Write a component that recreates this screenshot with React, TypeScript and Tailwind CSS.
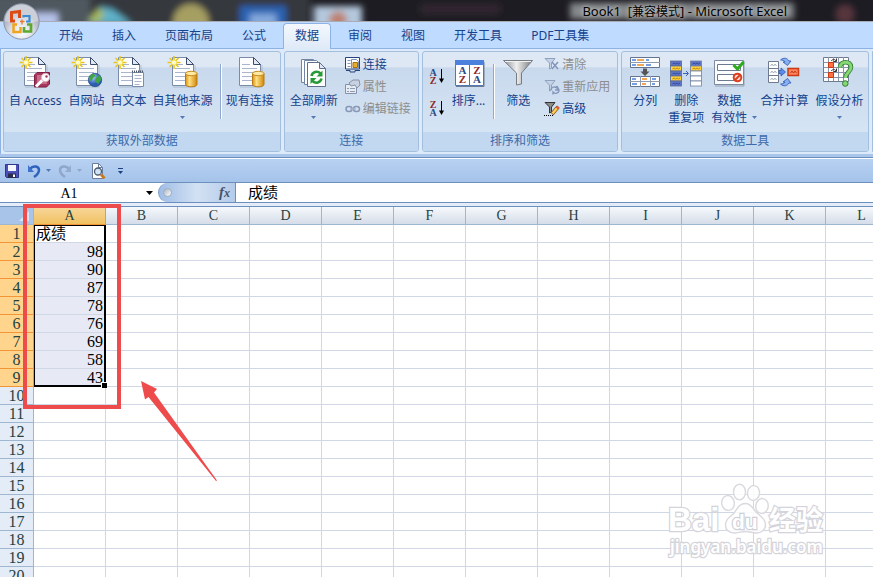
import { ReactNode, useState } from "react";

const TABS = ["开始", "插入", "页面布局", "公式", "数据", "审阅", "视图", "开发工具", "PDF工具集"];
const COLUMNS = "ABCDEFGHIJKLMNOPQRSTUVWXYZ".split("");
const ROWS = Array.from({ length: 60 }, (_, i) => i + 1);
const SCORES = ["成绩", "98", "90", "87", "78", "76", "69", "58", "43"];

const Svg = ({ children, size = "size-8", box = "0 0 32 32" }: { children: ReactNode; size?: string; box?: string }) => (
	<svg className={`${size} shrink-0`} viewBox={box} fill="none" aria-hidden="true">
		{children}
	</svg>
);

const Doc = () => (
	<>
		<path d="M6 31h22V9" stroke="#8d9bb0" strokeOpacity=".5" />
		<path d="M5.5 1.5h14l7 7v21h-21z" fill="#fdfdff" stroke="#7b8ca8" />
		<path d="M19.5 1.5v7h7z" fill="#dfe8f4" stroke="#3c4c68" />
		<path d="M8 8.5h8M8 12.5h15M8 16.5h15M8 20.5h15M8 24.5h15" stroke="#a9b5cb" />
	</>
);

const Star = () => (
	<>
		<path d="M7 0v13M.5 6.500h13M2.500 2l9 9M11.500 2l-9 9" stroke="#e8c520" strokeWidth="1.600" />
		<circle cx="7" cy="6.500" r="2.600" fill="#fffbd0" stroke="#f7e04a" />
	</>
);

const Cylinder = () => (
	<>
		<path d="M18.500 17.500v11c0 3 11.500 3 11.500 0v-11z" fill="url(#gold)" stroke="#b87a10" />
		<ellipse cx="24.200" cy="17.500" rx="5.800" ry="2.200" fill="#ffe9a0" stroke="#c58a1c" />
	</>
);

const AccessIcon = () => (
	<Svg>
		<Doc />
		<Star />
		<path d="M18 16.500h12.500V28l-3 3H15.500V19z" fill="#a8355c" stroke="#7d2144" />
		<path d="M18 19h10v9H18z" fill="#c76c8a" />
		<path d="M17 30.500l8-8" stroke="#fff" strokeWidth="3" />
		<circle cx="26.500" cy="21.500" r="4.200" fill="#fff" stroke="#d9a8b8" />
		<circle cx="27.500" cy="20.500" r="1.200" fill="#a8355c" />
	</Svg>
);

const WebIcon = () => (
	<Svg>
		<Doc />
		<Star />
		<circle cx="24" cy="24" r="6.700" fill="url(#globe)" stroke="#2c4f8c" strokeWidth=".8" />
		<path d="M19 20c2-3 4-2 5-1s-1 2-2 3-1 3-2 3-2-3-1-5zM25 22l3-3c2 1 2 3 2 5l-3 4-3-3z" fill="#3fa544" />
	</Svg>
);

const TextIcon = () => (
	<Svg>
		<Doc />
		<Star />
		<path d="M19.500 16.500h11v14h-11z" fill="#fff" stroke="#7b8ca8" />
		<path d="M19 15.500h12" stroke="#4a5568" strokeWidth="2" strokeDasharray="1 1" />
		<path d="M21.500 19.500h7M21.500 22.500h7M21.500 25.500h7M21.500 28.500h5" stroke="#a9b5cb" />
	</Svg>
);

const OtherIcon = () => (
	<Svg>
		<Doc />
		<Star />
		<Cylinder />
	</Svg>
);

const ExistingIcon = () => (
	<Svg>
		<Doc />
		<Cylinder />
	</Svg>
);

const RefreshIcon = () => (
	<Svg>
		<path d="M3.500 3.500h12l4 4v19h-16z" fill="#fff" stroke="#7285a5" />
		<path d="M6.500 4.500h12l5 5v19h-17z" fill="#fff" stroke="#7285a5" />
		<path d="M9.500 6.500h12l6 6v18h-18z" fill="#fff" stroke="#5f708c" />
		<path d="M21.500 6.500v6h6z" fill="#dfe8f4" stroke="#5f708c" />
		<path d="M13.500 20c.8-4.500 6-5.500 9-2.500M23.500 22.500c-1 4.500-6 5.500-9 2.500" stroke="#279b35" strokeWidth="2.600" />
		<path d="M24.500 14.500v6h-6zM12.500 28v-6h6z" fill="#279b35" />
	</Svg>
);

const SortIcon = () => (
	<Svg>
		<path d="M3 30.500h28V6" stroke="#6b7c96" />
		<path d="M2.500 4.500h28v25h-28z" fill="#fff" stroke="#5677ad" />
		<path d="M2 4h29v5H2z" fill="#4b80dc" />
		<path d="M16.500 9v20" stroke="#5f708c" />
		<g fontFamily="Liberation Serif, serif" fontSize="11" fontWeight="bold" textAnchor="middle">
			<text x="9.500" y="18" fill="#2b4a85">A</text>
			<text x="9.500" y="27" fill="#8e2828">Z</text>
			<text x="24" y="18" fill="#8e2828">Z</text>
			<text x="24" y="27" fill="#2b4a85">A</text>
		</g>
	</Svg>
);

const SortOrder = ({ top, bottom }: { top: string; bottom: string }) => (
	<Svg size="size-4" box="0 0 16 16">
		<g fontFamily="Liberation Serif, serif" fontSize="10" fontWeight="bold" textAnchor="middle">
			<text x="4" y="7.500" fill={top === "A" ? "#2b4a85" : "#8e2828"}>{top}</text>
			<text x="4" y="15.500" fill={bottom === "A" ? "#2b4a85" : "#8e2828"}>{bottom}</text>
		</g>
		<path d="M12.500 1v12" stroke="#000" />
		<path d="M10 10.500h5l-2.500 4.500z" fill="#000" />
	</Svg>
);

const FunnelIcon = () => (
	<Svg>
		<path d="M1.500 4.500h29L19.500 17v11l-5 1V17z" fill="url(#steel)" stroke="#777c83" />
		<path d="M3 5.500h26" stroke="#f2f2f2" />
	</Svg>
);

const SplitIcon = () => (
	<Svg>
		<path d="M1.500 1.500h29v10h-29zM1.500 20.500h29v10h-29z" fill="#fff" stroke="#64748f" />
		<path d="M1 6.500h30M1 25.500h30M11.500 20v11M21.500 20v11" stroke="#8d9ab0" />
		<path d="M3 4h4M3 9h4M17 4h3M17 9h5M3 23h4M3 28h5M23 23h4M23 28h3" stroke="#4b7edb" strokeWidth="1.400" />
		<path d="M8 4h7M8 9h7M13 23h5M13 28h4" stroke="#f08a1d" strokeWidth="1.600" />
		<path d="M14 12.500h4v3h2.500l-4.500 4.500-4.500-4.500H14z" fill="#555" />
	</Svg>
);

const DedupeIcon = () => (
	<Svg>
		{[5, 10, 15, 20, 25].map((y, i) => (
			<g key={y}>
				<rect x=".500" y={y} width="11" height="5" fill={i % 2 ? "#ffd23c" : "#5d76ca"} stroke="#5a6a94" strokeWidth=".8" />
				<path d={`M2.500 ${y + 3}l1.500-1 1.500 1 1.500-1 1.500 1 1.500-1`} stroke={i % 2 ? "#a57a16" : "#2c3f8d"} strokeWidth=".8" />
				<rect x="20.500" y={y} width="11" height="5" fill={["#5d76ca", "#ffd23c", "#fff", "#fff", "#fff"][i]} stroke="#7180a0" strokeWidth=".8" />
				{i < 2 && (
					<path d={`M22.500 ${y + 3}l1.500-1 1.500 1 1.500-1 1.500 1 1.500-1`} stroke={i ? "#a57a16" : "#2c3f8d"} strokeWidth=".8" />
				)}
			</g>
		))}
		<path d="M13 17.500h5M16 15l2.500 2.500L16 20" stroke="#3b62b8" />
	</Svg>
);

const ValidationIcon = () => (
	<Svg>
		<path d="M2 30h29V5" stroke="#929fb2" />
		<path d="M1.500 4.500h29v24h-29z" fill="#fbfcfe" stroke="#7d8aa0" />
		<path d="M4.500 8.500h23v6h-23zM4.500 18.500h23v6h-23z" fill="#fff" stroke="#6d7a92" />
		<path d="M20.500 9l4 4 6-7" stroke="#2faa1e" strokeWidth="3" />
		<circle cx="24.500" cy="21.500" r="3.800" fill="#fbe0d8" stroke="#d8401f" strokeWidth="2" />
		<path d="M22 24l5-5" stroke="#d8401f" strokeWidth="2" />
	</Svg>
);

const MergeIcon = () => (
	<Svg>
		<path d="M.500 5.500h10v21H.500zM.500 12.500h10M.500 19.500h10" fill="#fff" stroke="#6d7a92" />
		<path d="M2.500 9.500l1.500-1 1.500 1 1.500-1 1.500 1M2.500 16.500l1.500-1 1.500 1 1.500-1 1.500 1M2.500 23.500l1.500-1 1.500 1 1.500-1 1.500 1" stroke="#8e9ab0" />
		<path d="M11 14.500h2V12l4.500 4-4.500 4v-2.500h-2z" fill="#5c8de8" stroke="#2d57ae" strokeWidth=".8" />
		<path d="M12.500 4c3-3 7-2 8.500 1h2l-3.500 4.500L15 6h2c-1-1.500-2.500-2-4.500-2z" fill="#86aff0" stroke="#2d57ae" strokeWidth=".8" />
		<path d="M12.500 28c3 3 7 2 8.500-1h2l-3.500-4.500L15 26h2c-1 1.500-2.500 2-4.500 2z" fill="#86aff0" stroke="#2d57ae" strokeWidth=".8" />
		<path d="M20 12.500h10.500v7H20z" fill="#ff8258" stroke="#c93a16" strokeWidth="1.500" />
		<path d="M22.500 16.500l1.500-1 1.500 1 1.500-1 1.500 1" stroke="#a42a0c" />
	</Svg>
);

const WhatIfIcon = () => (
	<Svg>
		<path d="M.500 1.500h25v24H.500z" fill="#fff" stroke="#6d7a92" />
		<path d="M.500 6.500h25M.500 11.500h25M.500 16.500h25M.500 21.500h25M5.500 1v24M10.500 1v24M15.500 1v24M20.500 1v24" stroke="#8794ab" />
		<path d="M5.500 6.500h5v5h-5zM5.500 16.500h5v5h-5z" fill="#ff7043" stroke="#c93a16" />
		<path d="M8 5c2-2 4-2 5 0M8 15c2-2 4-2 5 0M13.500 2.500v3h-3M13.500 12.500v3h-3" stroke="#333" />
		<path d="M17 11.500c0-7 11-7 11-.5 0 5-5.500 5.500-5.500 11" stroke="#2f7d33" strokeWidth="4.600" />
		<path d="M17 11.500c0-7 11-7 11-.5 0 5-5.500 5.500-5.500 11" stroke="#86d673" strokeWidth="3" />
		<circle cx="22.300" cy="27.500" r="2.800" fill="#86d673" stroke="#2f7d33" />
	</Svg>
);

const LinkedIcon = () => (
	<Svg size="size-4" box="0 0 16 16">
		<path d="M.5.500h14v11.500H.500z" fill="#fff" stroke="#26437b" />
		<path d="M2.500 3.500h3M2.500 6.500h3M2.500 9.500h3" stroke="#8294b6" />
		<path d="M6.500 2.500h5l2 2v7h-7z" fill="#fff" stroke="#7d8fb3" />
		<path d="M8 5.500h4.500v5H8z" fill="#e9ad2a" stroke="#a46f0c" />
		<path d="M1 13.500h4v1.500h5v-1.500h5" stroke="#26437b" />
	</Svg>
);

const PropsIcon = () => (
	<Svg size="size-4" box="0 0 16 16">
		<path d="M.5 5.500h11v9H.500z" fill="#e7ecf4" stroke="#8592aa" />
		<path d="M2 9.500h2M5 9.500h5M2 12.500h2M5 12.500h5" stroke="#8f9bb1" />
		<path d="M4 4l4-3h6l1 5-3 3-2-3-4 1z" fill="#c8d1df" stroke="#8592aa" />
	</Svg>
);

const ChainIcon = () => (
	<Svg size="size-4" box="0 0 16 16">
		<rect x="1" y="5.500" width="6" height="5" rx="2.500" stroke="#8797b6" strokeWidth="1.500" />
		<rect x="8.500" y="5.500" width="6" height="5" rx="2.500" stroke="#8797b6" strokeWidth="1.500" />
		<path d="M5 8h6" stroke="#a9b5cb" strokeWidth="1.500" />
	</Svg>
);

const SmallFunnel = ({ kind }: { kind: "clear" | "reapply" | "advanced" }) => (
	<Svg size="size-4" box="0 0 16 16">
		<path
			d="M1 1.500h10L7.500 6v5l-2 1V6z"
			fill={kind === "advanced" ? "#8c8c8c" : "#c6d2e5"}
			stroke={kind === "advanced" ? "#333" : "#8fa1c1"}
		/>
		{kind === "clear" && <path d="M8 5l6 7M14 5l-6 7" stroke="#8497bb" strokeWidth="1.600" />}
		{kind === "reapply" && <path d="M7 11c0-3 4-4 6-2v-2l2 4h-4M15 12c-1 3-4 3-6 1v2.500" stroke="#8497bb" strokeWidth="1.400" />}
		{kind === "advanced" && (
			<>
				<path d="M0 14.500h9" stroke="#000" strokeDasharray="1 1" />
				<path d="M8 13l6-7" stroke="#8b5a12" strokeWidth="4" />
				<path d="M8.500 12.500l5-6" stroke="#ffcf5a" strokeWidth="2.400" />
				<path d="M13 7.500l1.500-2" stroke="#d95b43" strokeWidth="3" />
			</>
		)}
	</Svg>
);

const Caret = ({ className = "text-[#5579b5]" }: { className?: string }) => (
	<svg className={`${className} w-[5px] h-[3px] shrink-0`} viewBox="0 0 5 3" aria-hidden="true">
		<path d="M0 0h5L2.500 3z" fill="currentColor" />
	</svg>
);

const BigButton = ({ icon, lines, menu }: { icon: ReactNode; lines: string[]; menu?: boolean }) => (
	<button type="button" className="flex flex-col items-center px-[3px] pt-1 whitespace-nowrap">
		{icon}
		<span className="mt-1 flex flex-col items-center leading-[17px]">
			{lines.map((line, i) => (
				<span key={line} className="flex items-center gap-[5px]">
					{line}
					{menu && i === 1 && <Caret className="-mr-[10px] text-[#5579b5]" />}
				</span>
			))}
			{menu && lines.length === 1 && (
				<span className="flex h-[17px] items-center">
					<Caret />
				</span>
			)}
		</span>
	</button>
);

const SmallButton = ({ icon, label, disabled }: { icon: ReactNode; label: string; disabled?: boolean }) => (
	<button
		type="button"
		disabled={disabled}
		className="flex h-[22px] items-center gap-[2px] whitespace-nowrap disabled:text-[#8d8d8d]"
	>
		{icon}
		{label}
	</button>
);

const Divider = () => <div className="mt-3 h-[55px] w-[2px] shrink-0 border-l border-[#8faad0] bg-white" />;

const Group = ({ title, className, children }: { title: string; className: string; children: ReactNode }) => (
	<section className="flex h-[101px] shrink-0 flex-col overflow-hidden rounded-[3px] border border-[#a3bfdd] bg-linear-to-b from-[#dee8f5] from-15% via-[#c9d9ed] via-16% to-[#d9e8f6]">
		<div className={`flex h-20 ${className}`}>{children}</div>
		<h2 className="flex-1 bg-[#c1d8f0] text-center leading-[18px] text-[#3e6aaa]">{title}</h2>
	</section>
);

const Wallpaper = () => (
	<svg className="absolute inset-0 h-full w-full" aria-hidden="true">
		<defs>
			<filter id="soft" x="-20%" y="-50%" width="140%" height="200%">
				<feGaussianBlur stdDeviation="3" />
			</filter>
		</defs>
		<g filter="url(#soft)">
			<rect x="-10" y="-8" width="320" height="40" fill="#34383c" />
			<rect x="-10" y="-4" width="100" height="34" fill="#50585e" />
			<rect x="32" y="13" width="26" height="14" fill="#b7c3ea" />
			<path d="M88 24l12-17 12 2 20 15z" fill="#5fb2c9" />
			<path d="M88 20l11-12 6 6-8 10z" fill="#a8b860" />
			<circle cx="191" cy="22" r="18" fill="#a69f62" />
			<rect x="240" y="6" width="46" height="24" fill="#2c63b4" />
			<rect x="250" y="14" width="26" height="12" fill="#85aade" />
			<rect x="314" y="6" width="48" height="24" fill="#b4c8dd" />
			<circle cx="338" cy="20" r="9" fill="#bd8271" />
			<rect x="420" y="4" width="80" height="10" fill="#302830" />
			<rect x="570" y="3" width="224" height="16" fill="#85898c" />
			<circle cx="845" cy="14" r="10" fill="#56363e" />
		</g>
	</svg>
);

const OfficeButton = () => (
	<button type="button" aria-label="Office" className="absolute top-[3px] left-[3px] z-10 size-[37px]">
		<svg viewBox="0 0 37 37" className="size-full" fill="none">
			<circle cx="18.500" cy="18.500" r="17.700" fill="url(#orb)" stroke="#8b95a7" />
			<path d="M2 18a16.500 16.500 0 0133 0c-8 3-25 3-33 0z" fill="#fff" fillOpacity=".3" />
			<path d="M12 18H8.500V9.500L16.500 8.500V15" stroke="#dd4a14" strokeWidth="3" />
			<path d="M20.500 14.500V13H26.500V18.500H23" stroke="#3d8bd0" strokeWidth="2.200" />
			<path d="M14 21.500H10.500V29H17.500V24" stroke="#f1a51c" strokeWidth="2.500" />
			<path d="M21 24V28.500H28V21.500H24" stroke="#5fa830" strokeWidth="2.700" />
			<path d="M17 18.500h4.500M19 16.500v5" stroke="#e8792a" strokeWidth="1.300" />
		</svg>
	</button>
);

const QuickAccess = () => (
	<div className="flex h-6 shrink-0 items-center border-t border-white bg-linear-to-b from-[#b7d1f2] to-[#a5c3ea] pl-1">
		<button type="button" aria-label="保存" className="mr-[6px]">
			<Svg size="size-4" box="0 0 16 16">
				<path d="M1.500 1.500h13v13h-12l-1-1z" fill="#4c50b8" stroke="#30348c" />
				<path d="M4 2h8v6H4z" fill="#f4f6fd" />
				<path d="M4 10.500h8V15H4z" fill="#2b2b4e" />
				<path d="M9 11.500h2V14H9z" fill="#fff" />
			</Svg>
		</button>
		<button type="button" aria-label="撤消" className="flex items-center gap-1">
			<Svg size="size-4" box="0 0 16 16">
				<path d="M4 6c3-4 9-3 9 1 0 3-2 5-5 7" stroke="#2f62bc" strokeWidth="2.500" />
				<path d="M2 2v7h6z" fill="#3c72cc" />
			</Svg>
			<Caret />
		</button>
		<button type="button" aria-label="恢复" disabled className="ml-[6px] flex items-center gap-1">
			<Svg size="size-4" box="0 0 16 16">
				<path d="M12 6C9 2 3 3 3 7c0 3 2 5 5 7" stroke="#8ea6ca" strokeWidth="2.500" />
				<path d="M14 2v7H8z" fill="#94abce" />
			</Svg>
			<Caret className="text-[#8ea6ca]" />
		</button>
		<button type="button" aria-label="打印预览" className="ml-2">
			<Svg size="size-4" box="0 0 16 16">
				<path d="M2.500.5h6l4 4v11h-10z" fill="#fff" stroke="#6b7d9c" />
				<path d="M8.500.5v4h4" stroke="#6b7d9c" />
				<circle cx="8" cy="8.500" r="3.500" fill="#cfe4f5" stroke="#4a5a72" strokeWidth="1.300" />
				<path d="M11 11.500l3.500 4" stroke="#c9791d" strokeWidth="2.800" />
			</Svg>
		</button>
		<button type="button" aria-label="自定义快速访问工具栏" className="ml-3 flex flex-col items-center gap-[2px]">
			<span className="h-px w-[5px] bg-[#1c3f7f]" />
			<Caret className="text-[#1c3f7f]" />
		</button>
	</div>
);

const FormulaBar = () => {
	const [value, setValue] = useState("成绩");

	return (
		<div className="flex h-[21px] shrink-0 border-y border-[#6d8fbe] bg-white font-['Liberation_Serif','Noto_Sans_CJK_SC',serif] text-black">
			<input aria-label="名称框" defaultValue="A1" className="w-[138px] pt-[2px] text-center text-sm outline-none" />
			<button type="button" aria-label="名称列表" className="flex w-5 items-center justify-center pl-[2px]">
				<svg className="h-1 w-[7px]" viewBox="0 0 7 4">
					<path d="M0 0h7L3.500 4z" fill="#000" />
				</svg>
			</button>
			<div className="flex w-[78px] items-center justify-between rounded-l-full border-r border-l border-r-[#6d8fbe] border-l-[#7f9dc8] bg-linear-to-r from-[#9fbde6] via-[#d3e1f3] to-[#b3cbea] pr-1 pl-1">
				<span className="size-[9px] rounded-full border border-[#9fadbf] bg-linear-to-br from-[#aab4c2] to-white" />
				<button type="button" aria-label="插入函数" className="pr-px text-[15px] leading-4 font-bold text-[#46536a] italic">
					f<span className="text-[12px]">x</span>
				</button>
			</div>
			<input
				aria-label="编辑栏"
				value={value}
				onChange={event => setValue(event.target.value)}
				className="min-w-0 flex-1 pt-[2px] pl-3 text-[15px] outline-none"
			/>
		</div>
	);
};

const Watermark = () => (
	<svg className="pointer-events-none absolute right-[44px] bottom-[16px] h-[78px] w-[162px]" viewBox="0 0 162 78" aria-hidden="true">
		<g fontFamily="Liberation Sans, Noto Sans CJK SC, sans-serif" fontWeight="bold" fill="#fff" stroke="#d4d4da" strokeWidth="2.400" paintOrder="stroke">
			<text x="1" y="48" fontSize="33">Bai</text>
			<text x="102" y="47" fontSize="27">经验</text>
			<text x="3" y="70" fontSize="17" fontFamily="Noto Sans, sans-serif" fontWeight="600">jingyan.baidu.com</text>
		</g>
		<g fill="#fff" fillOpacity=".85" stroke="#d9d9de" strokeWidth="1.400">
			<ellipse cx="61" cy="20" rx="6.300" ry="7.500" transform="rotate(-8 61 20)" />
			<ellipse cx="72.500" cy="9" rx="6" ry="7.800" />
			<ellipse cx="86.500" cy="10" rx="6" ry="7.500" transform="rotate(8 86.500 10)" />
			<ellipse cx="95" cy="23" rx="6.200" ry="7.500" transform="rotate(8 95 23)" />
			<path d="M78.500 20.500c-6 0-8 5-11 9s-9 6-9 12 4 8.500 9 8.500 7-1.500 11-1.500 7 1.500 11 1.500 9-2.500 9-8.500-5-8-9-12-5-9-11-9z" />
		</g>
		<text x="65" y="46" fontFamily="Liberation Sans, sans-serif" fontSize="21" fontWeight="bold" fill="#fff" stroke="#d0d0d8" strokeWidth="2.400" paintOrder="stroke">
			du
		</text>
	</svg>
);

const Sheet = () => (
	<div className="relative min-h-0 flex-1">
		<div className="h-full overflow-hidden">
			<table className="border-separate border-spacing-0 font-['Liberation_Serif','Noto_Sans_CJK_SC',serif] text-base leading-4 text-black">
				<thead>
					<tr className="text-sm leading-4 text-[#27413e]">
						<th aria-label="全选" className="h-[18px] w-[34px] min-w-[34px] border-r border-b border-[#9eb6ce] bg-[#a9c4e9] p-0">
							<svg className="ml-auto mr-1 size-[10px]" viewBox="0 0 10 10">
								<path d="M10 0v10H0z" fill="#d9e5f5" />
							</svg>
						</th>
						{COLUMNS.map((column, i) => (
							<th
								key={column}
								className={
									i === 0
										? "h-[18px] w-[72px] min-w-[72px] border-r border-b border-[#f29536] bg-linear-to-b from-[#f8d79b] to-[#f1c15f] p-0 pt-px font-normal"
										: "h-[18px] w-[72px] min-w-[72px] border-r border-b border-[#9eb6ce] bg-linear-to-b from-[#f6f9fc] to-[#d5dde9] p-0 pt-px font-normal"
								}
							>
								{column}
							</th>
						))}
					</tr>
				</thead>
				<tbody>
					{ROWS.map(row => (
						<tr key={row}>
							<th
								className={
									row <= SCORES.length
										? "h-[18px] border-r border-b border-[#f29536] bg-[#ffd58d] p-0 pt-px font-normal text-[#27413e]"
										: "h-[18px] border-r border-b border-[#9eb6ce] bg-[#e4ecf7] p-0 pt-px font-normal text-[#27413e]"
								}
							>
								{row}
							</th>
							{COLUMNS.map((column, i) => {
								const score = i === 0 ? SCORES[row - 1] : undefined;
								if (!score) {
									return <td key={column} className="h-[18px] border-r border-b border-[#d0d7e5] p-0" />;
								}
								return (
									<td
										key={column}
										className={
											row === 1
												? "h-[18px] border-r border-b border-[#d0d7e5] p-0 pt-px pl-[2px] text-[15px]"
												: "h-[18px] border-r border-b border-[#d0d7e5] bg-[#e7eaf5] p-0 pt-px pr-[2px] text-right"
										}
									>
										{score}
									</td>
								);
							})}
						</tr>
					))}
				</tbody>
			</table>
		</div>
		{/* selection frame and fill handle */}
		<div className="pointer-events-none absolute top-[18px] left-[34px] h-[162px] w-[72px] border-t border-r-2 border-b-2 border-l border-black">
			<span className="absolute -right-[3px] -bottom-[3px] size-[6px] border-t border-l border-white bg-black" />
		</div>
		<div className="pointer-events-none absolute -top-[3px] left-[23px] h-[205px] w-[98px] border-4 border-[#ee4c4c]" />
		<svg className="pointer-events-none absolute top-[173px] left-[140px] h-[102px] w-[78px]" viewBox="0 0 78 102" aria-hidden="true">
			<path d="M1 1l16 8-3 3.500L77 100.500l-1 .5L8.500 17 5 19.500z" fill="#ee4c4c" />
		</svg>
		<Watermark />
	</div>
);

const App = () => {
	const [active, setActive] = useState("数据");

	return (
		<div className="relative flex h-screen flex-col overflow-hidden bg-white font-['Noto_Sans','Noto_Sans_CJK_SC',sans-serif] text-xs text-[#15428b]">
			<svg className="absolute size-0" aria-hidden="true">
				<defs>
					<linearGradient id="gold">
						<stop stopColor="#d8920f" />
						<stop offset=".35" stopColor="#ffe084" />
						<stop offset="1" stopColor="#d08608" />
					</linearGradient>
					<radialGradient id="globe" cx=".35" cy=".3">
						<stop stopColor="#a8cef5" />
						<stop offset="1" stopColor="#2a5cb0" />
					</radialGradient>
					<linearGradient id="steel">
						<stop stopColor="#8c8f94" />
						<stop offset=".45" stopColor="#efefef" />
						<stop offset="1" stopColor="#77797d" />
					</linearGradient>
					<radialGradient id="orb" cx=".5" cy=".8">
						<stop stopColor="#ffffff" />
						<stop offset=".6" stopColor="#dde1ea" />
						<stop offset="1" stopColor="#b4bac8" />
					</radialGradient>
				</defs>
			</svg>
			<OfficeButton />
			<header className="relative flex h-[22px] shrink-0 items-center justify-end overflow-hidden border-b border-[#a9acb4] bg-[#1d1c22] pr-[86px]">
				<Wallpaper />
				<h1 className="relative text-[13px] leading-5 whitespace-pre text-black [text-shadow:0_0_4px_#ddd,0_0_8px_#aaa]">
					Book1  [<span className="text-xs">兼容模式</span>] - Microsoft Excel
				</h1>
			</header>
			<nav className="flex h-[27px] shrink-0 items-end gap-[5px] border-b border-[#8db2e3] bg-[#bfdbff] pl-[47px]">
				{TABS.map(tab => (
					<button
						key={tab}
						type="button"
						onClick={() => setActive(tab)}
						className={
							tab === active
								? "-mb-px h-[26px] rounded-t-[4px] border border-b-0 border-[#8db2e3] bg-linear-to-b from-[#f4f8fd] to-[#dfeaf8] px-[11px] pb-[2px] whitespace-nowrap"
								: "h-[25px] px-3 whitespace-nowrap"
						}
					>
						{tab}
					</button>
				))}
			</nav>
			<main className="flex shrink-0 gap-[3px] border-l border-[#8db2e3] bg-[#dceafa] px-[2px] pt-[2px] pb-[2px]">
				<Group title="获取外部数据" className="pr-[3px] pl-[2px]">
					<div className="flex pr-px">
						<BigButton icon={<AccessIcon />} lines={["自 Access"]} />
					</div>
					<BigButton icon={<WebIcon />} lines={["自网站"]} />
					<BigButton icon={<TextIcon />} lines={["自文本"]} />
					<BigButton icon={<OtherIcon />} lines={["自其他来源"]} menu />
					<div className="pr-px pl-1">
						<Divider />
					</div>
					<BigButton icon={<ExistingIcon />} lines={["现有连接"]} />
				</Group>
				<Group title="连接" className="gap-1 pr-[7px] pl-[2px]">
					<BigButton icon={<RefreshIcon />} lines={["全部刷新"]} menu />
					<div className="flex flex-col pt-[2px]">
						<SmallButton icon={<LinkedIcon />} label="连接" />
						<SmallButton icon={<PropsIcon />} label="属性" disabled />
						<SmallButton icon={<ChainIcon />} label="编辑链接" disabled />
					</div>
				</Group>
				<Group title="排序和筛选" className="gap-1 pr-[7px] pl-[6px]">
					<div className="flex flex-col gap-4 pt-4">
						<button type="button" aria-label="升序">
							<SortOrder top="A" bottom="Z" />
						</button>
						<button type="button" aria-label="降序">
							<SortOrder top="Z" bottom="A" />
						</button>
					</div>
					<BigButton icon={<SortIcon />} lines={["排序..."]} />
					<div className="pl-px">
						<Divider />
					</div>
					<BigButton icon={<FunnelIcon />} lines={["筛选"]} />
					<div className="flex flex-col pt-[2px] pl-[3px]">
						<SmallButton icon={<SmallFunnel kind="clear" />} label="清除" disabled />
						<SmallButton icon={<SmallFunnel kind="reapply" />} label="重新应用" disabled />
						<SmallButton icon={<SmallFunnel kind="advanced" />} label="高级" />
					</div>
				</Group>
				<Group title="数据工具" className="gap-px pr-[2px] pl-1">
					<BigButton icon={<SplitIcon />} lines={["分列"]} />
					<BigButton icon={<DedupeIcon />} lines={["删除", "重复项"]} />
					<div className="mr-[6px] flex">
						<BigButton icon={<ValidationIcon />} lines={["数据", "有效性"]} menu />
					</div>
					<BigButton icon={<MergeIcon />} lines={["合并计算"]} />
					<BigButton icon={<WhatIfIcon />} lines={["假设分析"]} menu />
				</Group>
				<div className="-mr-[2px] min-w-0 flex-1 rounded-l-[3px] border-l border-[#a3bfdd] bg-[#cfdef0]" />
			</main>
			<div className="h-1 shrink-0 border-b border-[#6d8fbe] bg-[#a9c5ea]" />
			<QuickAccess />
			<FormulaBar />
			<div className="h-1 shrink-0 border-b border-[#6d8fbe] bg-[#e3ecf8]" />
			<Sheet />
		</div>
	);
};

export default App;
